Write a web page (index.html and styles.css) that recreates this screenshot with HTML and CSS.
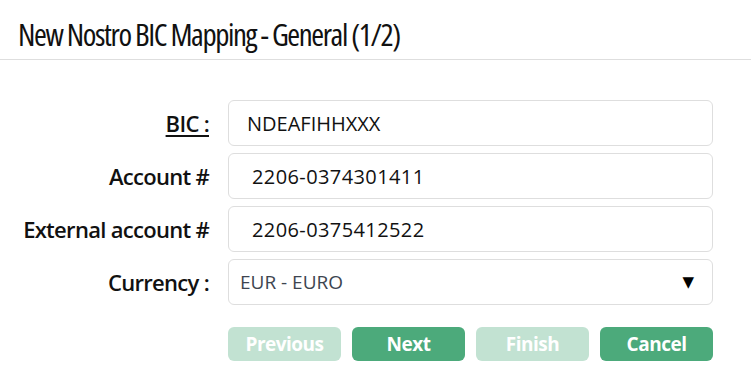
FILE: index.html
```html
<!DOCTYPE html>
<html lang="en">
<head>
  <meta charset="UTF-8" />
  <title>New Nostro BIC Mapping</title>
  <link rel="stylesheet" href="styles.css">
</head>
<body>

<div class="wizard">
  <div class="wizard-header">
    <h1>New Nostro BIC Mapping - General (1/2)</h1>
  </div>

  <form class="wizard-body">
    <div class="field">
      <label class="required">BIC :</label>
      <input type="text" class="bic" value="NDEAFIHHXXX">
    </div>
    <div class="field">
      <label>Account #</label>
      <input type="text" value="2206-0374301411">
    </div>
    <div class="field">
      <label>External account #</label>
      <input type="text" value="2206-0375412522">
    </div>
    <div class="field">
      <label>Currency :</label>
      <div class="select">
        <span>EUR - EURO</span>
        <span class="arrow">&#9660;</span>
      </div>
    </div>

    <div class="buttons">
      <button type="button" disabled>Previous</button>
      <button type="button">Next</button>
      <button type="button" disabled>Finish</button>
      <button type="button">Cancel</button>
    </div>
  </form>
</div>

</body>
</html>
```

FILE: styles.css
```css
:root {
  --green: #4caa7b;
  --green-light: #c2e2d2;
  --border: #dedede;
  --text: #111;
}

* {
  box-sizing: border-box;
}

body {
  margin: 0;
  font-family: 'Open Sans', 'Noto Sans', sans-serif;
  background: white;
  color: var(--text);
}

.wizard-header {
  padding: 14px 18px 0;
  height: 60px;
  border-bottom: 1px solid var(--border);
}

.wizard-header h1 {
  margin: 0;
  font-size: 31px;
  font-weight: 500;
  font-stretch: 75%;
  letter-spacing: -1.4px;
  line-height: 40px;
}

.wizard-body {
  padding: 40px 38px 0 0;
  width: 751px;
}

.field {
  display: grid;
  grid-template-columns: 209px 485px;
  column-gap: 19px;
  align-items: center;
  margin-bottom: 7px;
}

.field label {
  text-align: right;
  font-size: 22px;
  font-weight: 600;
  letter-spacing: -0.7px;
  white-space: nowrap;
}

.field label.required {
  text-decoration: underline;
  text-underline-offset: 3px;
}

.field input,
.select {
  height: 46px;
  border: 1px solid var(--border);
  border-radius: 6px;
  background: white;
  font-family: 'Open Sans', sans-serif;
  font-size: 20px;
  color: var(--text);
}

.field input {
  padding: 0 23px;
  letter-spacing: 0.4px;
}

.field input.bic {
  padding-left: 18px;
  letter-spacing: 0;
}

.select {
  display: flex;
  align-items: center;
  justify-content: space-between;
  padding: 0 18px 0 11px;
  font-size: 19px;
  color: #3d4550;
}

.select .arrow {
  color: black;
  font-family: 'DejaVu Sans', sans-serif;
  font-size: 15px;
}

.buttons {
  display: flex;
  gap: 11px;
  padding-left: 228px;
  margin-top: 22px;
}

.buttons button {
  width: 113px;
  height: 34px;
  border: none;
  border-radius: 6px;
  background: var(--green);
  color: white;
  font-family: 'Open Sans', sans-serif;
  font-size: 19px;
  font-weight: 700;
  letter-spacing: -0.5px;
  padding: 0;
}

.buttons button:disabled {
  background: var(--green-light);
}
```
